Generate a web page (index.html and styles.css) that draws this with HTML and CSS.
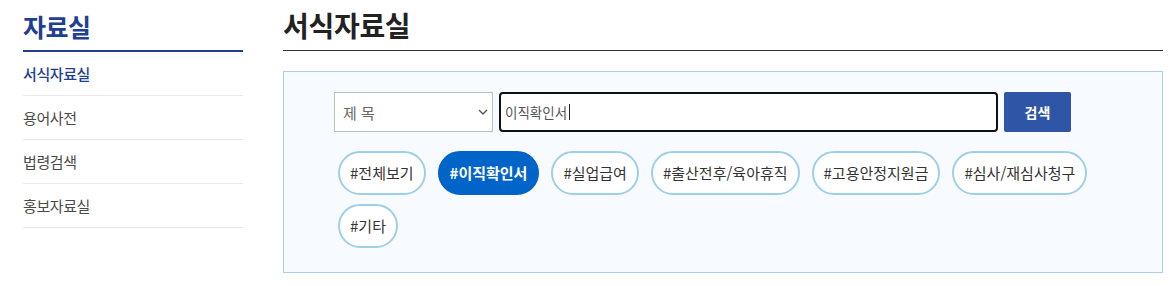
FILE: index.html
```html
<!DOCTYPE html>
<html lang="ko">

<head>
  <meta charset="UTF-8">
  <meta name="viewport" content="width=device-width, initial-scale=1.0">
  <title>서식자료실</title>
  <link rel="stylesheet" href="styles.css">
</head>

<body>
  <div class="wrap">
    <aside class="side">
      <h2 class="side-title">자료실</h2>
      <ul class="side-menu">
        <li class="on"><a href="#">서식자료실</a></li>
        <li><a href="#">용어사전</a></li>
        <li><a href="#">법령검색</a></li>
        <li><a href="#">홍보자료실</a></li>
      </ul>
    </aside>

    <main class="content">
      <h1 class="page-title">서식자료실</h1>

      <div class="search-box">
        <form class="search-row" onsubmit="return false;">
          <div class="select-wrap">
            <select class="search-select">
              <option>제 목</option>
              <option>내 용</option>
            </select>
            <svg class="select-arrow" width="10" height="6" viewBox="0 0 10 6">
              <path d="M1 1l4 4 4-4" fill="none" stroke="#555" stroke-width="1.4" />
            </svg>
          </div>
          <div class="search-input-wrap">
            <input type="text" class="search-input" value="이직확인서">
          </div>
          <button type="submit" class="search-button">검색</button>
        </form>

        <ul class="tags">
          <li><a href="#" class="tag">#전체보기</a></li>
          <li><a href="#" class="tag on">#이직확인서</a></li>
          <li><a href="#" class="tag">#실업급여</a></li>
          <li><a href="#" class="tag">#출산전후/육아휴직</a></li>
          <li><a href="#" class="tag">#고용안정지원금</a></li>
          <li><a href="#" class="tag">#심사/재심사청구</a></li>
          <li><a href="#" class="tag">#기타</a></li>
        </ul>
      </div>
    </main>
  </div>
</body>

</html>
```

FILE: styles.css
```css
body {
  margin: 0;
  font-family: "Noto Sans CJK KR", "Noto Sans", sans-serif;
  background-color: #fff;
  color: #333;
}

ul {
  list-style: none;
  margin: 0;
  padding: 0;
}

a {
  text-decoration: none;
  color: inherit;
}

.wrap {
  display: flex;
  gap: 40px;
  padding: 0 9px 0 23px;
}

/* 사이드 메뉴 */
.side {
  width: 220px;
  flex-shrink: 0;
}

.side-title {
  margin: 0;
  height: 50px;
  line-height: 52px;
  font-size: 25px;
  font-weight: 700;
  color: #1f3f92;
  letter-spacing: -0.5px;
  border-bottom: 2px solid #1f3f92;
}

.side-menu li {
  height: 43px;
  line-height: 43px;
  border-bottom: 1px solid #e6e6e9;
  font-size: 15px;
  color: #4a4a4a;
  letter-spacing: -0.4px;
}

.side-menu li.on {
  color: #1f3f92;
  font-weight: 500;
}

/* 본문 */
.content {
  flex: 1;
}

.page-title {
  margin: 0;
  height: 50px;
  line-height: 50px;
  font-size: 28px;
  font-weight: 700;
  color: #222;
  letter-spacing: -0.3px;
  border-bottom: 1px solid #333;
}

.search-box {
  margin-top: 20px;
  padding: 20px 50px 24px;
  background-color: #f7fbff;
  border: 1px solid #a8d1e8;
}

.search-row {
  display: flex;
  gap: 6px;
  height: 40px;
}

.select-wrap {
  position: relative;
  width: 159px;
}

.search-select {
  appearance: none;
  width: 100%;
  height: 40px;
  padding: 0 24px 0 8px;
  border: 1px solid #bdbdbd;
  background-color: #fff;
  font-family: inherit;
  font-size: 15px;
  color: #666;
}

.select-arrow {
  position: absolute;
  right: 5px;
  top: 17px;
}

.search-input-wrap {
  position: relative;
  width: 499px;
}

.search-input {
  width: 100%;
  height: 40px;
  box-sizing: border-box;
  padding: 0 4px;
  border: 2px solid #111;
  border-radius: 4px;
  background-color: #fff;
  font-family: inherit;
  font-size: 13.5px;
  color: #555;
  outline: none;
}

/* 입력 커서 */
.search-input-wrap::after {
  content: "";
  position: absolute;
  left: 70px;
  top: 12px;
  width: 1px;
  height: 16px;
  background-color: #222;
}

.search-button {
  width: 67px;
  height: 40px;
  border: none;
  border-radius: 2px;
  background-color: #2f56a6;
  color: #fff;
  font-family: inherit;
  font-size: 14px;
  font-weight: 700;
  cursor: pointer;
}

.tags {
  display: flex;
  flex-wrap: wrap;
  gap: 9px 12px;
  margin-top: 19px;
  padding-left: 4px;
}

.tag {
  display: block;
  height: 40px;
  line-height: 40px;
  padding: 0 10px;
  border: 2px solid #9ecfea;
  border-radius: 22px;
  background-color: #fff;
  font-size: 15px;
  color: #333;
}

.tag.on {
  background-color: #0064c8;
  border-color: #0064c8;
  color: #fff;
  font-weight: 700;
}
```
